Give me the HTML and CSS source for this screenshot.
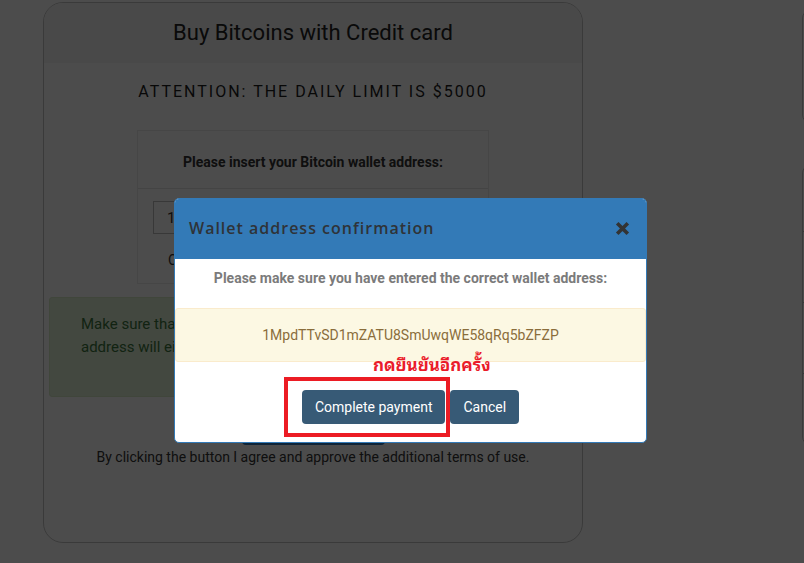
FILE: index.html
```html
<!DOCTYPE html>
<html lang="en">
<head>
<meta charset="utf-8">
<title>Buy Bitcoins with Credit card</title>
<link rel="stylesheet" href="styles.css">
</head>
<body>
<div class="page">
  <main class="card">
    <header class="card-head">
      <h1 class="card-title">Buy Bitcoins with Credit card</h1>
    </header>
    <section class="card-body">
      <p class="attention">ATTENTION: THE DAILY LIMIT IS $5000</p>
      <div class="panel">
        <div class="panel-head">Please insert your Bitcoin wallet address:</div>
        <div class="panel-body">
          <input class="addr-input" type="text" value="1MpdTTvSD1mZATU8SmUwqWE58qRq5bZFZP">
          <p class="panel-note">Continue to confirm your wallet address</p>
        </div>
      </div>
      <div class="alert-success">Make sure that the wallet address you entered is correct. A wrong<br>address will either be rejected or the coins will be lost.</div>
      <div class="buy-wrap"><button class="buy-btn">Buy Bitcoins</button></div>
      <p class="terms">By clicking the button I agree and approve the additional terms of use.</p>
    </section>
  </main>
  <aside class="side">
    <div class="side-card"></div>
    <div class="side-card side-list">
      <div class="side-row"></div>
      <div class="side-row"></div>
      <div class="side-row"></div>
      <div class="side-row"></div>
    </div>
  </aside>
</div>

<div class="overlay"></div>

<div class="modal">
  <div class="modal-head">
    <h2 class="modal-title">Wallet address confirmation</h2>
    <svg class="modal-close" width="15" height="15" viewBox="0 0 15 15" aria-hidden="true">
      <path d="M2.2 2.2 L12.8 12.8 M12.8 2.2 L2.2 12.8" stroke="#333" stroke-width="3.6" stroke-linecap="butt"/>
    </svg>
  </div>
  <div class="modal-body">
    <p class="modal-lead">Please make sure you have entered the correct wallet address:</p>
    <div class="alert-warning">1MpdTTvSD1mZATU8SmUwqWE58qRq5bZFZP</div>
  </div>
  <div class="modal-foot">
    <button class="btn-dark">Complete payment</button>
    <button class="btn-dark">Cancel</button>
  </div>
  <span class="annot-text">กดยืนยันอีกครั้ง</span>
  <span class="annot-box"></span>
</div>
</body>
</html>
```
FILE: styles.css
```css
html, body {
  margin: 0;
  padding: 0;
  overflow: hidden;
  background: #ffffff;
  font-family: Roboto, "Liberation Sans", Arial, sans-serif;
  color: #333;
}
.page {
  display: flex;
  align-items: flex-start;
  gap: 219px;
  padding: 2px 0 0 43px;
  width: 1200px;
}
.card {
  width: 538px;
  height: 539px;
  border: 1px solid #c4c4c4;
  border-radius: 20px;
  overflow: hidden;
  flex: none;
}
.card-head {
  height: 60px;
  background: #f3f3f3;
  display: flex;
  align-items: center;
  justify-content: center;
}
.card-title {
  margin: 0;
  font-size: 22px;
  font-weight: 400;
  color: #222;
  padding-bottom: 2px;
}
.card-body {
  padding: 19px 5px 0;
}
.attention {
  margin: 0;
  text-align: center;
  font-size: 16px;
  line-height: 20px;
  letter-spacing: 2px;
  color: #1c1c1c;
}
.panel {
  width: 350px;
  margin: 28px auto 0;
  border: 1px solid #ececec;
}
.panel-head {
  height: 58px;
  border-bottom: 1px solid #e4e4e4;
  display: flex;
  align-items: center;
  justify-content: center;
  padding-top: 4px;
  box-sizing: border-box;
  font-size: 14px;
  font-weight: 700;
  color: #333;
}
.panel-body {
  padding: 12px 15px 0;
  height: 82px;
}
.addr-input {
  display: block;
  box-sizing: border-box;
  width: 320px;
  height: 33px;
  border: 1px solid #bbb;
  padding: 0 13px;
  font: 15px Roboto, sans-serif;
  color: #333;
  background: #fff;
}
.panel-note {
  margin: 18px 0 0;
  padding-left: 15px;
  font-size: 14px;
  color: #333;
}
.alert-success {
  margin-top: 13px;
  height: 100px;
  box-sizing: border-box;
  background: #dff0d8;
  border: 1px solid #d6e9c6;
  border-radius: 3px;
  color: #3c763d;
  font-size: 15px;
  line-height: 23px;
  padding: 15px 20px 0 31px;
  white-space: nowrap;
}
.buy-wrap {
  display: flex;
  justify-content: center;
  padding: 14px 0 0 0;
}
.buy-btn {
  width: 143px;
  height: 34px;
  background: #337ab7;
  border: none;
  border-radius: 4px;
  color: #fff;
  font: 14px Roboto, sans-serif;
}
.terms {
  margin: 2px 0 0;
  text-align: center;
  font-size: 14px;
  line-height: 20px;
  color: #333;
}
.side {
  display: flex;
  flex-direction: column;
  gap: 42px;
  padding-top: 8px;
}
.side-card {
  width: 300px;
  height: 111px;
  border: 1px solid #c4c4c4;
  border-radius: 8px;
}
.side-list {
  height: auto;
}
.side-row {
  height: 70px;
  border-top: 1px solid #c4c4c4;
}
.side-row:first-child {
  border-top: none;
  height: 65px;
}
.overlay {
  position: fixed;
  inset: 0;
  background: rgba(0, 0, 0, 0.7);
}
.modal {
  position: absolute;
  left: 174px;
  top: 198px;
  width: 471px;
  background: #fff;
  border: 1px solid #337ab7;
  border-radius: 5px;
  overflow: visible;
}
.modal-head {
  height: 60px;
  background: #337ab7;
  border-radius: 4px 4px 0 0;
  display: flex;
  align-items: center;
  justify-content: space-between;
  padding: 0 16px 0 14px;
}
.modal-title {
  margin: 0;
  font-family: "Open Sans", sans-serif;
  font-size: 16px;
  font-weight: 600;
  letter-spacing: 1px;
  color: #2f3338;
  padding-bottom: 2px;
}
.modal-close {
  display: block;
  margin-bottom: 1px;
}
.modal-body {
  padding: 10px 0 0;
}
.modal-lead {
  margin: 0;
  text-align: center;
  font-size: 14px;
  line-height: 18px;
  font-weight: 700;
  color: #7b7b7b;
}
.alert-warning {
  margin-top: 21px;
  height: 54px;
  box-sizing: border-box;
  background: #fcf8e3;
  border: 1px solid #faebcc;
  border-radius: 3px;
  color: #8a6d3b;
  font-size: 14px;
  display: flex;
  align-items: center;
  justify-content: center;
}
.modal-foot {
  display: flex;
  justify-content: center;
  gap: 5px;
  padding: 28px 0 18px;
}
.btn-dark {
  height: 34px;
  padding: 0 13px;
  background: #375a76;
  border: none;
  border-radius: 4px;
  color: #fff;
  font: 14px Roboto, sans-serif;
}
.annot-text {
  position: absolute;
  left: 198px;
  top: 151px;
  color: #ea1c2a;
  font-family: "Noto Sans Thai Looped", "Loma", "Tahoma", "Noto Sans Thai", sans-serif;
  font-size: 17px;
  font-weight: 700;
  white-space: nowrap;
}
.annot-box {
  position: absolute;
  left: 109px;
  top: 178px;
  width: 158px;
  height: 52px;
  border: 4px solid #ec1c24;
}
```
